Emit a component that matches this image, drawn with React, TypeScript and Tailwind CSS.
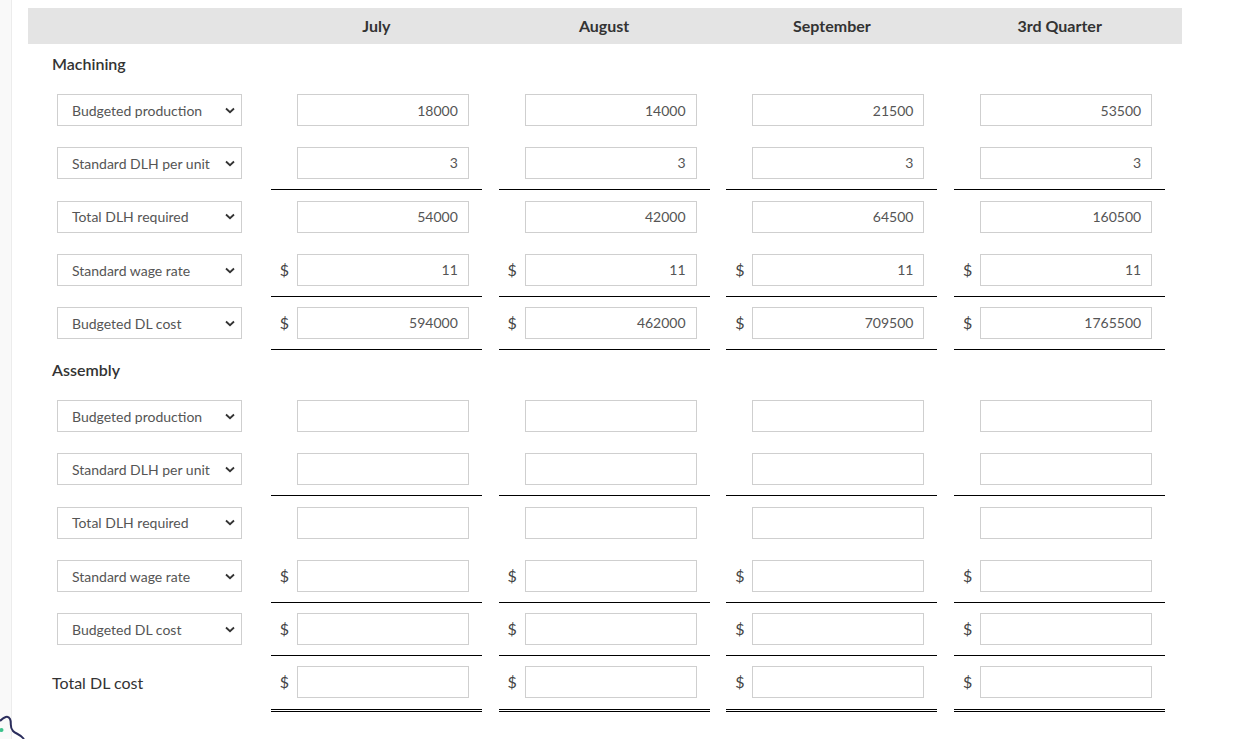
const months = ['July', 'August', 'September', '3rd Quarter'];

type Row = {
  label: string;
  values: string[];
  dollar?: boolean;
  line?: boolean;
};

const machining: Row[] = [
  { label: 'Budgeted production', values: ['18000', '14000', '21500', '53500'] },
  { label: 'Standard DLH per unit', values: ['3', '3', '3', '3'], line: true },
  { label: 'Total DLH required', values: ['54000', '42000', '64500', '160500'] },
  { label: 'Standard wage rate', values: ['11', '11', '11', '11'], dollar: true, line: true },
  { label: 'Budgeted DL cost', values: ['594000', '462000', '709500', '1765500'], dollar: true, line: true },
];

const assembly: Row[] = machining.map((r) => ({ ...r, values: ['', '', '', ''] }));

const Chevron = () => (
  <svg width="10" height="7" viewBox="0 0 10 7" className="text-[#333]">
    <path d="M1 1.5 L5 5.2 L9 1.5" fill="none" stroke="currentColor" strokeWidth="1.8" />
  </svg>
);

const Cell = ({ value, dollar, line, double }: { value: string; dollar?: boolean; line?: boolean; double?: boolean }) => (
  <div className="w-[228px] h-full">
    <div
      className={`w-[211px] h-full flex items-center ${line ? 'border-b border-black' : ''} ${double ? 'border-b-[3px] border-double border-black' : ''}`}
    >
      <div className="w-[26px] text-center text-[16px] text-[#444] pl-[1px]">{dollar ? '$' : ''}</div>
      <div className="w-[172px] h-[32px] border border-[#cfcfcf] flex items-center justify-end pr-[10px] text-[14px] text-[#555]">
        {value}
      </div>
    </div>
  </div>
);

const DataRow = ({ row }: { row: Row }) => (
  <div className="flex h-[53.3px]">
    <div className="w-[243px] h-full flex items-center pl-[29px]">
      <div className="w-[185px] h-[32px] border border-[#cfcfcf] flex items-center justify-between pl-[14px] pr-[6px] text-[14px] text-[#555]">
        <span>{row.label}</span>
        <Chevron />
      </div>
    </div>
    {row.values.map((v, i) => (
      <Cell key={i} value={v} dollar={row.dollar} line={row.line} />
    ))}
  </div>
);

const SectionLabel = ({ text }: { text: string }) => (
  <div className="h-[39.5px] flex items-center pl-[24px] text-[16px] font-semibold text-[#333]">{text}</div>
);

export default function App() {
  return (
    <div className="relative flex h-[739px] w-[1252px] overflow-hidden bg-white font-['Lato',sans-serif]">
      <div className="w-[12px] h-full bg-[#f9f9f9] border-r border-[#ececec]" />
      <div className="flex-1 pl-[16px] pt-[8px]">
        <div className="w-[1154px]">
          <div className="flex h-[36px] bg-[#e4e4e4] items-center">
            <div className="w-[243px]" />
            {months.map((m) => (
              <div key={m} className="w-[228px]">
                <div className="w-[211px] text-center text-[16px] font-bold text-[#333]">{m}</div>
              </div>
            ))}
          </div>
          <SectionLabel text="Machining" />
          {machining.map((r) => (
            <DataRow key={r.label} row={r} />
          ))}
          <SectionLabel text="Assembly" />
          {assembly.map((r) => (
            <DataRow key={r.label} row={r} />
          ))}
          <div className="flex h-[56px]">
            <div className="w-[243px] h-[53.3px] flex items-center pl-[24px] text-[16px] text-[#333]">Total DL cost</div>
            {months.map((m) => (
              <Cell key={m} value="" dollar double />
            ))}
          </div>
        </div>
      </div>
      <svg className="absolute left-0 top-[713px]" width="30" height="26" viewBox="0 0 30 26">
        <path d="M0 8 C4 4 8 2 10 6 C12 10 9 14 13 18 C16 21 20 21 24 26" fill="none" stroke="#2b2d5c" strokeWidth="2" />
        <circle cx="1.5" cy="17" r="2" fill="#3cc28c" />
      </svg>
    </div>
  );
}
